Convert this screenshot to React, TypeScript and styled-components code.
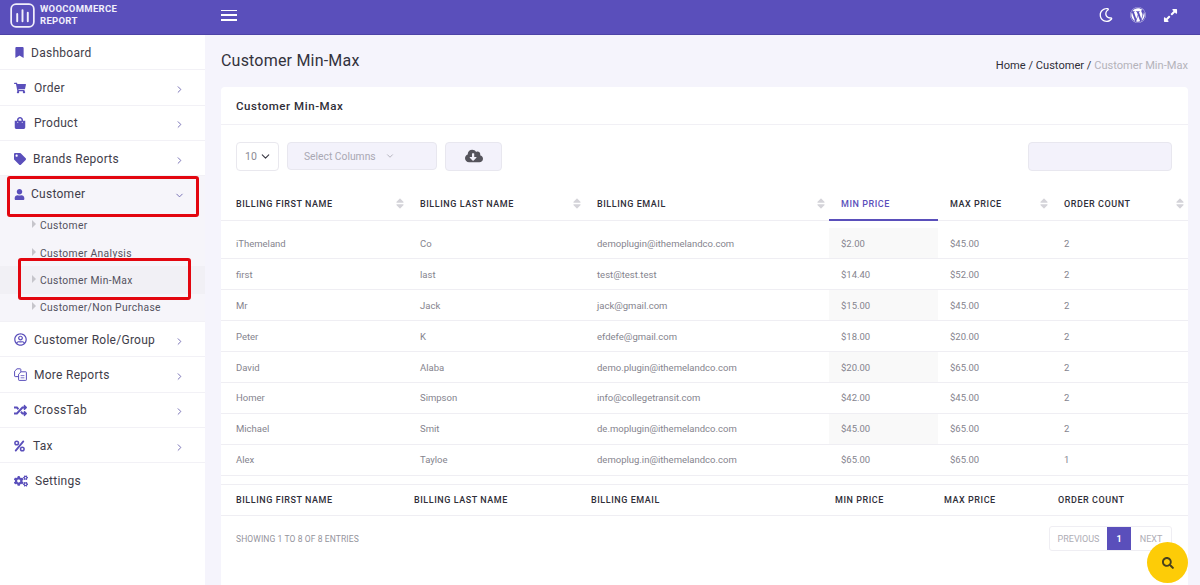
import React from 'react';
import styled, { createGlobalStyle } from 'styled-components';
import {
  FaBookmark,
  FaShoppingCart,
  FaShoppingBag,
  FaTag,
  FaUser,
  FaRegUserCircle,
  FaRandom,
  FaCogs,
  FaRegMoon,
  FaWordpress,
  FaExpandAlt,
  FaCloudDownloadAlt,
  FaSearch,
  FaSortUp,
  FaSortDown,
} from 'react-icons/fa';
import { ChevronRight, ChevronDown } from 'lucide-react';

const PURPLE = '#5a4fbb';

const GlobalStyle = createGlobalStyle`
  html, body {
    margin: 0;
    height: 100%;
    overflow: hidden;
    font-family: Roboto, "Liberation Sans", sans-serif;
    background: #f5f4fc;
  }
  * { box-sizing: border-box; }
`;

const Page = styled.div`
  width: 1200px;
  height: 585px;
  display: flex;
  flex-direction: column;
  overflow: hidden;
`;

const Topbar = styled.header`
  height: 35px;
  flex: none;
  padding-bottom: 4px;
  display: flex;
  align-items: center;
  background: ${PURPLE};
  color: #fff;
  border-bottom: 1px solid #4d43a6;
`;

const Brand = styled.div`
  width: 221px;
  padding-left: 10px;
  display: flex;
  align-items: center;
  gap: 5px;
`;

const BrandText = styled.div`
  font-size: 9.5px;
  font-weight: 700;
  line-height: 12px;
  letter-spacing: 0.3px;
  color: #f1effb;
`;

const Burger = styled.button`
  width: 16px;
  height: 11px;
  padding: 0;
  border: 0;
  background: none;
  display: flex;
  flex-direction: column;
  justify-content: space-between;
  span {
    display: block;
    height: 1.5px;
    background: #fff;
  }
`;

const TopIcons = styled.div`
  margin-left: auto;
  padding-right: 22px;
  display: flex;
  align-items: center;
  gap: 17px;
  font-size: 16px;
  svg { display: block; }
`;

const Body = styled.div`
  flex: 1;
  display: flex;
  min-height: 0;
`;

const Sidebar = styled.nav`
  width: 205px;
  flex: none;
  background: #fff;
  font-size: 12px;
  letter-spacing: 0.27px;
  color: #3f3d4a;
`;

const NavRow = styled.div<{ $open?: boolean; $plain?: boolean }>`
  position: relative;
  height: 35.3px;
  padding: 1px 20px 0 14px;
  display: flex;
  align-items: center;
  border-bottom: ${(p) => (p.$plain || p.$open ? '0' : '1px solid #f2f1f6')};
  background: ${(p) => (p.$open ? '#f6f5fa' : 'transparent')};
`;

const NavIcon = styled.span<{ $w: number }>`
  width: ${(p) => p.$w}px;
  flex: none;
  display: flex;
  color: ${PURPLE};
  font-size: 12px;
`;

const NavChevron = styled.span`
  margin-left: auto;
  display: flex;
  color: #6f68b0;
  padding-top: 3px;
`;

const SubMenu = styled.div`
  background: #f6f5fa;
  border-bottom: 1px solid #f2f1f6;
`;

const SubRow = styled.div<{ $active?: boolean }>`
  position: relative;
  height: 27.4px;
  padding: 1px 0 0 32px;
  display: flex;
  align-items: center;
  gap: 4px;
  font-size: 10.3px;
  letter-spacing: 0.35px;
  color: #54525e;
  background: ${(p) => (p.$active ? '#f1f0f5' : 'transparent')};
`;

const SubCaret = styled.i`
  width: 0;
  height: 0;
  margin-top: -3px;
  border-left: 4px solid #c6c5cb;
  border-top: 4px solid transparent;
  border-bottom: 4px solid transparent;
`;

const Marker = styled.span<{ $variant: 'parent' | 'child' }>`
  position: absolute;
  pointer-events: none;
  border: 3px solid #e3060f;
  border-radius: 3px;
  left: ${(p) => (p.$variant === 'parent' ? 7 : 18)}px;
  width: ${(p) => (p.$variant === 'parent' ? 192 : 173)}px;
  top: ${(p) => (p.$variant === 'parent' ? 0 : -8)}px;
  height: ${(p) => (p.$variant === 'parent' ? 41 : 42)}px;
`;

const Main = styled.main`
  flex: 1;
  min-width: 0;
  padding: 0 12px 0 16px;
  display: flex;
  flex-direction: column;
  background: #f5f4fc;
`;

const PageHead = styled.div`
  height: 52px;
  flex: none;
  display: flex;
  justify-content: space-between;
`;

const PageTitle = styled.h1`
  margin: 15px 0 0;
  font-size: 16px;
  line-height: 22px;
  font-weight: 400;
  letter-spacing: 0.2px;
  color: #33323c;
`;

const Crumbs = styled.div`
  margin-top: 23px;
  font-size: 11.1px;
  line-height: 15px;
  color: #2f2e38;
  white-space: pre;
  span { color: #b4b3ba; }
`;

const Card = styled.section`
  flex: 1;
  background: #fff;
  border-radius: 4px 4px 0 0;
  display: flex;
  flex-direction: column;
`;

const CardHead = styled.div`
  height: 38px;
  flex: none;
  padding: 1px 15px 0;
  display: flex;
  align-items: center;
  border-bottom: 1px solid #f1f0f5;
  font-size: 11.5px;
  font-weight: 500;
  letter-spacing: 0.55px;
  color: #2f2e38;
`;

const Toolbar = styled.div`
  height: 30px;
  margin: 16px 16px 0 15px;
  flex: none;
  display: flex;
  align-items: center;
  gap: 8px;
`;

const LengthSelect = styled.div`
  width: 43px;
  height: 29px;
  padding: 0 6px 0 8px;
  display: flex;
  align-items: center;
  justify-content: space-between;
  border: 1px solid #e9e8ee;
  border-radius: 4px;
  font-size: 10.5px;
  color: #8b8a94;
  svg { color: #3a3944; }
`;

const ColumnsButton = styled.div`
  width: 150px;
  height: 28px;
  padding-left: 16px;
  display: flex;
  align-items: center;
  gap: 9px;
  background: #f3f2fb;
  border: 1px solid #e8e7ef;
  border-radius: 4px;
  font-size: 10.3px;
  color: #a9a8b3;
`;

const CloudButton = styled.div`
  width: 57px;
  height: 29px;
  display: flex;
  align-items: center;
  justify-content: center;
  background: #f3f2fb;
  border: 1px solid #e8e7ef;
  border-radius: 4px;
  color: #55545c;
  font-size: 18px;
`;

const SearchInput = styled.div`
  width: 144px;
  height: 29px;
  margin-left: auto;
  background: #f3f2fb;
  border: 1px solid #e8e7ef;
  border-radius: 4px;
`;

const Table = styled.table<{ $top: number }>`
  width: 100%;
  flex: none;
  margin-top: ${(p) => p.$top}px;
  table-layout: fixed;
  border-collapse: collapse;
`;

const HeadCell = styled.th<{ $active?: boolean; $h: number }>`
  height: ${(p) => p.$h}px;
  padding: 0 0 0 12px;
  text-align: left;
  font-size: 9px;
  font-weight: 500;
  letter-spacing: 0.55px;
  color: ${(p) => (p.$active ? PURPLE : '#2f2e38')};
  &:first-child { padding-left: 15px; }
`;

const HeadInner = styled.div`
  display: flex;
  align-items: center;
  justify-content: space-between;
  padding-right: 4px;
`;

const SortMark = styled.span`
  position: relative;
  width: 8px;
  height: 13px;
  flex: none;
  color: #d4d3d9;
  svg {
    position: absolute;
    left: 0;
    top: 0;
    width: 8px;
    height: 13px;
  }
`;

const HeadRow = styled.tr<{ $edge: 'bottom' | 'both' }>`
  border-bottom: 1px solid #efeef3;
  border-top: ${(p) => (p.$edge === 'both' ? '1px solid #efeef3' : '0')};
`;

const ActiveBar = styled.div`
  height: 2px;
  position: absolute;
  left: 0;
  right: 0;
  bottom: -1px;
  background: ${PURPLE};
`;

const ActiveHead = styled(HeadCell)`
  position: relative;
`;

const Row = styled.tr`
  height: 30.9px;
  border-bottom: 1px solid #efeef3;
`;

const Cell = styled.td<{ $shaded?: boolean }>`
  padding: 0 0 0 12px;
  font-size: 9.5px;
  color: #85848e;
  white-space: nowrap;
  background: ${(p) => (p.$shaded ? '#f9f9f9' : 'transparent')};
  &:first-child { padding-left: 15px; }
`;

const BodySpacer = styled.tr<{ $h: number }>`
  height: ${(p) => p.$h}px;
`;

const TableFoot = styled.div`
  margin: 10px 16px 0 15px;
  display: flex;
  justify-content: space-between;
  align-items: center;
`;

const Showing = styled.div`
  font-size: 8.5px;
  letter-spacing: 0.1px;
  color: #94939c;
`;

const Pager = styled.div`
  height: 25px;
  display: flex;
  border: 1px solid #efeef3;
  border-radius: 3px;
  font-size: 9px;
  color: #aeadb5;
`;

const PageLink = styled.span<{ $current?: boolean; $w: number }>`
  width: ${(p) => p.$w}px;
  display: flex;
  align-items: center;
  justify-content: center;
  background: ${(p) => (p.$current ? PURPLE : 'transparent')};
  color: ${(p) => (p.$current ? '#fff' : 'inherit')};
  font-weight: ${(p) => (p.$current ? 700 : 400)};
`;

const SearchFab = styled.button`
  position: fixed;
  left: 1147px;
  top: 542px;
  width: 41px;
  height: 41px;
  padding: 0;
  border: 0;
  border-radius: 50%;
  background: #fdcc07;
  color: #47401c;
  font-size: 12px;
  display: flex;
  align-items: center;
  justify-content: center;
`;

const Logo = () => (
  <svg width="25" height="25" viewBox="0 0 26 26" fill="none" stroke="#f1effb">
    <rect x="1.2" y="1.2" width="23.6" height="23.6" rx="5" strokeWidth="1.8" />
    <path d="M7.5 11.5V19M13 7.5V19M18.5 10V19" strokeWidth="2" strokeLinecap="round" />
  </svg>
);

const ReportsIcon = () => (
  <svg width="13" height="13" viewBox="0 0 13 13" fill="none" stroke="currentColor" strokeWidth="1">
    <path d="M4.6 8.6H1.2a.6.6 0 0 1-.6-.6V3.2L3 .8h3.2a.6.6 0 0 1 .6.6v2.4" />
    <path d="M7 3.8h4.8a.6.6 0 0 1 .6.6v7.4a.6.6 0 0 1-.6.6H5.2a.6.6 0 0 1-.6-.6V6.2z" />
    <path d="M6.6 7.6h3.8M6.6 9.8h3.8" strokeWidth=".8" />
  </svg>
);

const TaxIcon = () => (
  <svg width="11" height="12" viewBox="0 0 11 12" fill="none" stroke="currentColor">
    <circle cx="2.7" cy="3" r="1.8" strokeWidth="1.5" />
    <circle cx="8.3" cy="9" r="1.8" strokeWidth="1.5" />
    <path d="M9.3 1.4 1.7 10.6" strokeWidth="1.8" strokeLinecap="round" />
  </svg>
);

const Sort = () => (
  <SortMark>
    <FaSortUp />
    <FaSortDown />
  </SortMark>
);

const menuTop = [
  { label: 'Order', icon: <FaShoppingCart />, w: 20 },
  { label: 'Product', icon: <FaShoppingBag />, w: 20 },
  { label: 'Brands Reports', icon: <FaTag />, w: 19 },
];

const menuBottom = [
  { label: 'Customer Role/Group', icon: <FaRegUserCircle size={13} />, w: 20 },
  { label: 'More Reports', icon: <ReportsIcon />, w: 20 },
  { label: 'CrossTab', icon: <FaRandom size={13} />, w: 20 },
  { label: 'Tax', icon: <TaxIcon />, w: 19 },
];

const subItems = ['Customer', 'Customer Analysis', 'Customer Min-Max', 'Customer/Non Purchase'];

const columns = [
  'Billing First Name',
  'Billing Last Name',
  'Billing Email',
  'Min Price',
  'Max Price',
  'Order Count',
];

const bodyWidths = [187, 177, 244, 109, 114, 136];
const footWidths = [181, 177, 244, 109, 114, 142];

const rows = [
  ['iThemeland', 'Co', 'demoplugin@ithemelandco.com', '$2.00', '$45.00', '2'],
  ['first', 'last', 'test@test.test', '$14.40', '$52.00', '2'],
  ['Mr', 'Jack', 'jack@gmail.com', '$15.00', '$45.00', '2'],
  ['Peter', 'K', 'efdefe@gmail.com', '$18.00', '$20.00', '2'],
  ['David', 'Alaba', 'demo.plugin@ithemelandco.com', '$20.00', '$65.00', '2'],
  ['Homer', 'Simpson', 'info@collegetransit.com', '$42.00', '$45.00', '2'],
  ['Michael', 'Smit', 'de.moplugin@ithemelandco.com', '$45.00', '$65.00', '2'],
  ['Alex', 'Tayloe', 'demoplug.in@ithemelandco.com', '$65.00', '$65.00', '1'],
];

const Cols = ({ widths }: { widths: number[] }) => (
  <colgroup>
    {widths.map((w, i) => (
      <col key={i} style={{ width: w }} />
    ))}
  </colgroup>
);

export default function App() {
  return (
    <Page>
      <GlobalStyle />
      <Topbar>
        <Brand>
          <Logo />
          <BrandText>
            WOOCOMMERCE
            <br />
            REPORT
          </BrandText>
        </Brand>
        <Burger aria-label="menu">
          <span />
          <span />
          <span />
        </Burger>
        <TopIcons>
          <FaRegMoon size={14} />
          <FaWordpress size={16} />
          <FaExpandAlt size={15} />
        </TopIcons>
      </Topbar>
      <Body>
        <Sidebar>
          <NavRow>
            <NavIcon $w={17}>
              <FaBookmark size={11} />
            </NavIcon>
            Dashboard
          </NavRow>
          {menuTop.map((m) => (
            <NavRow key={m.label}>
              <NavIcon $w={m.w}>{m.icon}</NavIcon>
              {m.label}
              <NavChevron>
                <ChevronRight size={11} />
              </NavChevron>
            </NavRow>
          ))}
          <NavRow $open>
            <NavIcon $w={17}>
              <FaUser size={11} />
            </NavIcon>
            Customer
            <NavChevron>
              <ChevronDown size={11} />
            </NavChevron>
            <Marker $variant="parent" />
          </NavRow>
          <SubMenu>
            {subItems.map((s) => (
              <SubRow key={s} $active={s === 'Customer Min-Max'}>
                <SubCaret />
                {s}
                {s === 'Customer Min-Max' && <Marker $variant="child" />}
              </SubRow>
            ))}
          </SubMenu>
          {menuBottom.map((m) => (
            <NavRow key={m.label}>
              <NavIcon $w={m.w}>{m.icon}</NavIcon>
              {m.label}
              <NavChevron>
                <ChevronRight size={11} />
              </NavChevron>
            </NavRow>
          ))}
          <NavRow $plain>
            <NavIcon $w={21}>
              <FaCogs size={14} />
            </NavIcon>
            Settings
          </NavRow>
        </Sidebar>
        <Main>
          <PageHead>
            <PageTitle>Customer Min-Max</PageTitle>
            <Crumbs>
              Home / Customer / <span>Customer Min-Max</span>
            </Crumbs>
          </PageHead>
          <Card>
            <CardHead>Customer Min-Max</CardHead>
            <Toolbar>
              <LengthSelect>
                10
                <ChevronDown size={13} />
              </LengthSelect>
              <ColumnsButton>
                Select Columns
                <ChevronDown size={10} />
              </ColumnsButton>
              <CloudButton>
                <FaCloudDownloadAlt />
              </CloudButton>
              <SearchInput />
            </Toolbar>
            <Table $top={17}>
              <Cols widths={bodyWidths} />
              <thead>
                <HeadRow $edge="bottom">
                  {columns.map((c) => {
                    const active = c === 'Min Price';
                    const Th = active ? ActiveHead : HeadCell;
                    return (
                      <Th key={c} $active={active} $h={32}>
                        <HeadInner>
                          {c.toUpperCase()}
                          {!active && <Sort />}
                        </HeadInner>
                        {active && <ActiveBar />}
                      </Th>
                    );
                  })}
                </HeadRow>
              </thead>
              <tbody>
                <BodySpacer $h={8} />
                {rows.map((r) => (
                  <Row key={r[0]}>
                    {r.map((v, i) => (
                      <Cell key={i} $shaded={i === 3 && r[0] !== 'first' && r[0] !== 'Peter' && r[0] !== 'Homer' && r[0] !== 'Alex'}>
                        {v}
                      </Cell>
                    ))}
                  </Row>
                ))}
                <BodySpacer $h={9} />
              </tbody>
            </Table>
            <Table $top={0}>
              <Cols widths={footWidths} />
              <tfoot>
                <HeadRow $edge="both">
                  {columns.map((c) => (
                    <HeadCell key={c} $h={31}>
                      {c.toUpperCase()}
                    </HeadCell>
                  ))}
                </HeadRow>
              </tfoot>
            </Table>
            <TableFoot>
              <Showing>SHOWING 1 TO 8 OF 8 ENTRIES</Showing>
              <Pager>
                <PageLink $w={57}>PREVIOUS</PageLink>
                <PageLink $w={24} $current>
                  1
                </PageLink>
                <PageLink $w={40}>NEXT</PageLink>
              </Pager>
            </TableFoot>
          </Card>
        </Main>
      </Body>
      <SearchFab aria-label="search">
        <FaSearch />
      </SearchFab>
    </Page>
  );
}
